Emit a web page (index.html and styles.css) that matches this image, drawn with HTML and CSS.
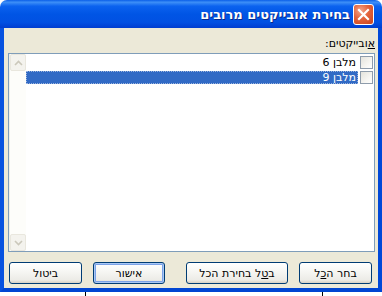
FILE: index.html
```html
<!DOCTYPE html>
<html lang="he" dir="rtl">
<head>
    <meta charset="UTF-8">
    <title>בחירת אובייקטים מרובים</title>
    <link rel="stylesheet" href="styles.css">
</head>
<body>
    <div class="window">
        <div class="titlebar">
            <div class="close-btn">
                <svg width="13" height="13" viewBox="0 0 13 13">
                    <path d="M2 2 L11 11 M11 2 L2 11" stroke="#fff" stroke-width="2.2" stroke-linecap="square"/>
                </svg>
            </div>
            <div class="title">בחירת אובייקטים מרובים</div>
        </div>

        <div class="frame">
            <div class="client">
                <div class="field-label"><u>א</u>ובייקטים:</div>

                <div class="listbox">
                    <div class="items">
                        <div class="item">
                            <span class="checkbox"></span>
                            <span class="item-text">מלבן 6</span>
                        </div>
                        <div class="item selected">
                            <span class="checkbox"></span>
                            <span class="item-text">מלבן 9</span>
                        </div>
                    </div>
                    <div class="scrollbar">
                        <div class="sb-btn">
                            <svg width="9" height="6" viewBox="0 0 9 6"><path d="M1 5 L4.5 1.5 L8 5" fill="none" stroke="#cbc8bb" stroke-width="1.6"/></svg>
                        </div>
                        <div class="sb-track"></div>
                        <div class="sb-btn">
                            <svg width="9" height="6" viewBox="0 0 9 6"><path d="M1 1 L4.5 4.5 L8 1" fill="none" stroke="#cbc8bb" stroke-width="1.6"/></svg>
                        </div>
                    </div>
                </div>

                <div class="buttons">
                    <button class="btn">בחר ה<u>כ</u>ל</button>
                    <button class="btn wide">ב<u>ט</u>ל בחירת הכל</button>
                    <button class="btn default">אישור</button>
                    <button class="btn">ביטול</button>
                </div>
            </div>
        </div>
    </div>

    <div class="behind">
        <span class="edge"></span>
        <span class="edge"></span>
    </div>
</body>
</html>
```

FILE: styles.css
```css
* {
    margin: 0;
    padding: 0;
    box-sizing: border-box;
}

body {
    font-family: "DejaVu Sans", "Liberation Sans", sans-serif;
    font-size: 11px;
    background: #fff;
    width: 382px;
    height: 296px;
    overflow: hidden;
}

.window {
    width: 382px;
    height: 292px;
    display: flex;
    flex-direction: column;
}

.titlebar {
    height: 28px;
    display: flex;
    align-items: center;
    padding: 0 8px 0 6px;
    gap: 3px;
    border-radius: 7px 7px 0 0;
    background: linear-gradient(to bottom, #0a5fe8 0%, #3d8ff7 8%, #0b62ef 22%, #0055e5 50%, #0150e2 80%, #003dd0 100%);
}

.close-btn {
    width: 21px;
    height: 21px;
    border: 1px solid #fff;
    border-radius: 3px;
    background: radial-gradient(circle at 35% 30%, #f5a58a 0%, #e3633c 45%, #c9431d 100%);
    display: flex;
    align-items: center;
    justify-content: center;
}

.title {
    color: #fff;
    font-size: 13px;
    font-weight: bold;
    text-shadow: 1px 1px 0 #0a2a8a;
    white-space: nowrap;
}

.frame {
    flex: 1;
    border: 4px solid #0055e5;
    border-top: none;
    border-left-color: #0752e0;
    border-right-color: #0048d8;
    border-bottom-color: #0045d2;
}

.client {
    height: 100%;
    background: #ece9d8;
    padding: 9px 3px 4px 4px;
    display: flex;
    flex-direction: column;
}

.field-label {
    height: 14px;
    line-height: 14px;
    margin-bottom: 2px;
    color: #000;
}

.listbox {
    height: 199px;
    border: 1px solid #7f9db9;
    background: #fff;
    display: flex;
}

.items {
    flex: 1;
}

.item {
    display: flex;
    align-items: center;
    height: 14px;
    margin-top: 1px;
}

.checkbox {
    width: 13px;
    height: 13px;
    margin: 0 1px 0 2px;
    border: 1px solid #8e9cab;
    background: linear-gradient(135deg, #e4e3dc 0%, #f6f5f1 60%, #fff 100%);
    flex-shrink: 0;
}

.item-text {
    flex: 1;
    height: 13px;
    line-height: 13px;
    padding: 0 2px;
    color: #000;
}

.item.selected .item-text {
    background: #316ac5;
    color: #fff;
    outline: 1px dotted #9cb4dd;
    outline-offset: -1px;
}

.scrollbar {
    width: 17px;
    display: flex;
    flex-direction: column;
    background: #fdfdfa;
    border-left: 1px solid #f0efe8;
}

.sb-btn {
    height: 17px;
    border: 1px solid #e9e7de;
    border-radius: 2px;
    background: #f4f3ee;
    display: flex;
    align-items: center;
    justify-content: center;
}

.sb-track {
    flex: 1;
}

.buttons {
    display: flex;
    margin-top: 10px;
    padding-right: 3px;
    gap: 11px;
}

.btn {
    width: 73px;
    height: 22px;
    font-family: inherit;
    font-size: 11px;
    color: #000;
    border: 1px solid #003c74;
    border-radius: 3px;
    background: linear-gradient(to bottom, #fff 0%, #f7f7f4 40%, #ecebe6 85%, #d6d0c5 100%);
}

.btn.wide {
    width: 102px;
}

.btn.default {
    width: 72px;
    margin-right: 10px;
    box-shadow: inset 0 0 0 1px #a9c8f5, inset 0 0 0 2px #7ba2e7;
}

.behind {
    height: 4px;
    display: flex;
    direction: ltr;
}

.edge {
    width: 1px;
    height: 4px;
    background: #000;
    margin-left: 85px;
}

.edge + .edge {
    margin-left: 236px;
}
```
